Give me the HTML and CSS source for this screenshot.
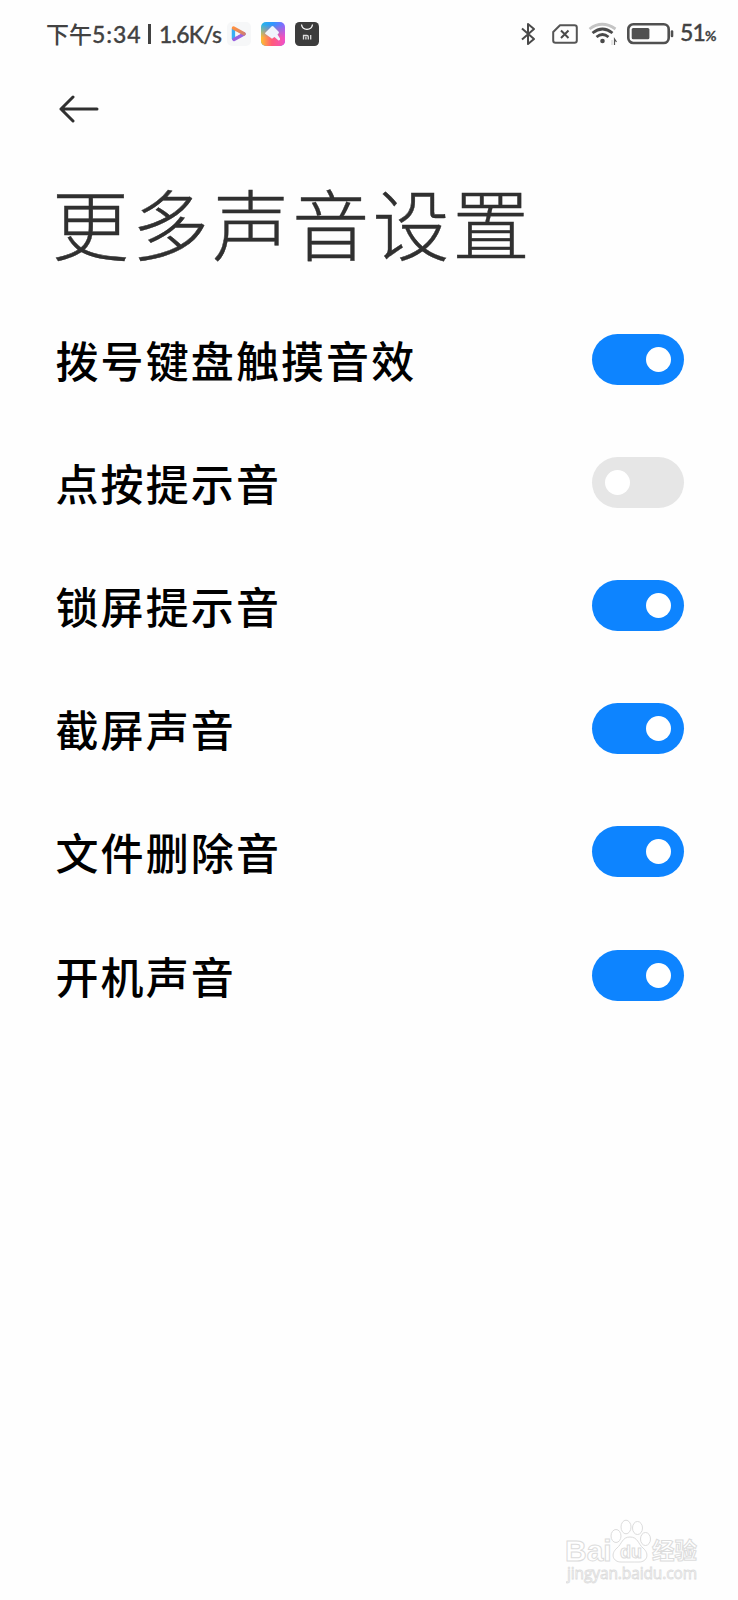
FILE: index.html
```html
<!DOCTYPE html>
<html lang="zh-CN">
<head>
  <meta charset="UTF-8" />
  <title>更多声音设置</title>
  <link rel="stylesheet" href="styles.css">
</head>
<body>
  <div class="statusbar">
    <div class="status-left">
      <span class="period">下午</span>
      <span class="clock">5:34</span>
      <span class="divider"></span>
      <span class="speed">1.6K/s</span>
      <svg class="app-icon" width="24" height="24" viewBox="0 0 24 24">
        <defs>
          <linearGradient id="play" x1="0" y1="0" x2="1" y2="1">
            <stop offset="0" stop-color="#ff9040" />
            <stop offset="1" stop-color="#d08070" />
          </linearGradient>
        </defs>
        <rect width="24" height="24" rx="5" fill="#f6f7f8" />
        <path d="M6.500 7v9.500" stroke="#38aef4" stroke-width="3.500" stroke-linecap="round" />
        <path d="M17 12L7 17.500" stroke="#9a62e0" stroke-width="3.500" stroke-linecap="round" />
        <path d="M6.500 6L17 11.800" stroke="url(#play)" stroke-width="3.500" stroke-linecap="round" />
        <path d="M8.500 9.500v5l4.500-2.500z" fill="#f6f7f8" />
      </svg>
      <svg class="app-icon" width="24" height="24" viewBox="0 0 24 24">
        <defs>
          <linearGradient id="theme" x1="0" y1="0" x2="1" y2="0">
            <stop offset="0" stop-color="#28b8e8" />
            <stop offset=".5" stop-color="#2f96ff" />
            <stop offset="1" stop-color="#8a68ff" />
          </linearGradient>
          <linearGradient id="theme-low" x1="0" y1="0" x2="1" y2="0">
            <stop offset="0" stop-color="#ffc02e" />
            <stop offset=".45" stop-color="#ff5b78" />
            <stop offset="1" stop-color="#f050c8" />
          </linearGradient>
          <linearGradient id="fade" x1="0" y1="0" x2="0" y2="1">
            <stop offset=".1" stop-color="#000" />
            <stop offset=".65" stop-color="#fff" />
          </linearGradient>
          <mask id="low"><rect width="24" height="24" fill="url(#fade)" /></mask>
        </defs>
        <rect width="24" height="24" rx="5" fill="url(#theme)" />
        <rect width="24" height="24" rx="5" fill="url(#theme-low)" mask="url(#low)" />
        <path d="M4.500 10.500l6-6q1-1 2 0l5 5q1 1 0 2l-1 1 2.500 4q.5 2-1.500 2l-4-3.500-1.500 1q-1 1-2 0l-5.500-4q-1-.7 0-1.500z" fill="#f0f4fc" />
      </svg>
      <svg class="app-icon" width="24" height="24" viewBox="0 0 24 24">
        <rect width="24" height="24" rx="4.500" fill="#3c3c3c" />
        <path d="M6.500 2.500c1 6.500 10 6.500 11 0" fill="none" stroke="#fff" stroke-width="1.300" />
        <path d="M8.500 17.500v-4h3.500q1.300 0 1.300 1.300v2.700M10.900 14.800v2.700M15.700 13v4.500" fill="none" stroke="#ddd" stroke-width="1.300" />
      </svg>
    </div>
    <div class="status-right">
      <svg class="bluetooth" width="16" height="24" viewBox="0 0 16 24">
        <path d="M2 6.500l12 10.500-6 5V2l6 5L2 17.500" fill="none" stroke="#4a4a4a" stroke-width="2" stroke-linejoin="round" />
      </svg>
      <svg class="sim" width="26" height="20" viewBox="0 0 26 20">
        <path d="M8 1.200h14.500q2.300 0 2.300 2.300v13q0 2.300-2.300 2.300h-19q-2.300 0-2.300-2.300V8z" fill="none" stroke="#555" stroke-width="2" stroke-linejoin="round" />
        <path d="M9 6.500l7.500 7.500M16.500 6.500L9 14" stroke="#4a4a4a" stroke-width="2" />
      </svg>
      <svg class="wifi" width="30" height="24" viewBox="0 0 30 24">
        <g fill="none" stroke-width="2.800">
          <path d="M1.500 7q12.500-9.500 26 0" stroke="#c4c4c4" />
          <path d="M4.500 11q10-8 20 0M8.500 15q6-5 12 0" stroke="#4a4a4a" />
        </g>
        <circle cx="14.500" cy="19" r="2.300" fill="#4a4a4a" />
        <path d="M24 18v5" stroke="#ccc" />
        <path d="M26.500 23v-6l2 3" fill="none" stroke="#555" stroke-width="1.200" />
      </svg>
      <svg class="battery" width="48" height="22" viewBox="0 0 48 22">
        <rect x="1.300" y="1.300" width="40.400" height="18.700" rx="5" fill="none" stroke="#505050" stroke-width="2.600" />
        <rect x="4.700" y="5" width="17.700" height="11.300" rx="1.500" fill="#505050" />
        <path d="M45 8.500v4.500" stroke="#505050" stroke-width="2.600" stroke-linecap="round" />
      </svg>
      <span class="percent">51<small>%</small></span>
    </div>
  </div>

  <header class="header">
    <svg class="back" width="40" height="28" viewBox="0 0 40 28">
      <path d="M38 14H2M14 2L2 14l12 12" fill="none" stroke="#303030" stroke-width="3" stroke-linecap="round" stroke-linejoin="round" />
    </svg>
    <h1>更多声音设置</h1>
  </header>

  <ul class="settings">
    <li><span>拨号键盘触摸音效</span><i class="switch on"></i></li>
    <li><span>点按提示音</span><i class="switch"></i></li>
    <li><span>锁屏提示音</span><i class="switch on"></i></li>
    <li><span>截屏声音</span><i class="switch on"></i></li>
    <li><span>文件删除音</span><i class="switch on"></i></li>
    <li><span>开机声音</span><i class="switch on"></i></li>
  </ul>

  <svg class="watermark" width="140" height="72" viewBox="0 0 140 72">
    <g fill="#fff" stroke="#dcdcdc" stroke-width="1">
      <text x="-1" y="46" class="wm-logo">Bai</text>
      <ellipse cx="50" cy="21" rx="5" ry="6.500" />
      <ellipse cx="60" cy="12" rx="5" ry="6.800" />
      <ellipse cx="71.500" cy="13" rx="5" ry="6.500" />
      <ellipse cx="79.500" cy="24" rx="5" ry="6.500" />
      <path d="M64 22c8 0 8 7 13 11 7 6 4 14-4 14-5 0-13 0-18 0-8 0-11-8-4-14 5-4 5-11 13-11z" />
      <text x="54" y="43" class="wm-du">du</text>
      <text x="86" y="44" class="wm-cn">经验</text>
    </g>
    <text x="1" y="64" class="wm-url" textLength="130">jingyan.baidu.com</text>
  </svg>
</body>
</html>
```

FILE: styles.css
```css
* {
  box-sizing: border-box;
}
body {
  margin: 0;
  width: 738px;
  height: 1600px;
  display: flex;
  flex-direction: column;
  background: #fefefe;
  color: #000;
  font-family: "Noto Sans", "Noto Sans CJK SC", sans-serif;
}
.statusbar {
  height: 68px;
  padding: 0 20px 0 46px;
  display: flex;
  justify-content: space-between;
  align-items: center;
  color: #424242;
  font-family: Lato, "Noto Sans CJK SC", sans-serif;
  font-size: 23px;
  font-weight: 500;
  line-height: 34px;
  white-space: nowrap;
}
.status-left,
.status-right {
  display: flex;
  align-items: center;
}
.period {
  width: 46px;
  margin-top: -2px;
  font-family: "Noto Sans CJK SC", sans-serif;
}
.clock {
  width: 49px;
  letter-spacing: 0.9px;
  -webkit-text-stroke: 0.3px #424242;
}
.divider {
  width: 3px;
  height: 20px;
  margin: 0 8px 0 7px;
  background: #424242;
}
.speed {
  width: 68px;
  letter-spacing: -0.8px;
  -webkit-text-stroke: 0.3px #424242;
}
.app-icon {
  margin-right: 10px;
}
.bluetooth {
  margin-right: 16px;
}
.sim {
  margin-right: 10px;
}
.wifi {
  margin-right: 9px;
}
.battery {
  margin-right: 5px;
}
.percent {
  width: 38px;
  letter-spacing: -0.8px;
  -webkit-text-stroke: 0.3px #424242;
}
.percent small {
  font-size: 14px;
  font-weight: 700;
}
.header {
  height: 230px;
  padding: 27px 52px 0;
}
.back {
  display: block;
  margin-left: 7px;
}
h1 {
  margin: 44px 0 0;
  color: #303030;
  font-family: "Noto Sans CJK SC", sans-serif;
  font-size: 77px;
  font-weight: 300;
  line-height: 110px;
  letter-spacing: 3.1px;
  white-space: nowrap;
  -webkit-text-stroke: 0.4px #303030;
}
.settings {
  margin: 0;
  padding: 0;
  list-style: none;
}
.settings li {
  height: 123.1px;
  padding: 0 54px 0 55.5px;
  display: flex;
  justify-content: space-between;
  align-items: center;
  font-family: "Noto Sans CJK SC", sans-serif;
  font-size: 43px;
  font-weight: 500;
  letter-spacing: 2.1px;
}
.settings span {
  margin-top: -1px;
}
.switch {
  width: 92px;
  height: 51px;
  padding: 0 13px;
  display: flex;
  align-items: center;
  border-radius: 26px;
  background: #e6e6e6;
}
.switch::before {
  content: "";
  width: 25px;
  height: 25px;
  border-radius: 50%;
  background: #fff;
}
.switch.on {
  justify-content: flex-end;
  background: #0d84ff;
}
.watermark {
  margin: auto 0 13px 566px;
}
.wm-logo {
  font: bold 30px "Liberation Sans", sans-serif;
}
.wm-du {
  font: bold 18px "Liberation Sans", sans-serif;
}
.wm-cn {
  font: bold 22.5px "Noto Sans CJK SC", sans-serif;
}
.wm-url {
  fill: #fff;
  stroke: #dcdcdc;
  stroke-width: 0.8px;
  font: 15.5px "Open Sans", sans-serif;
}
```
